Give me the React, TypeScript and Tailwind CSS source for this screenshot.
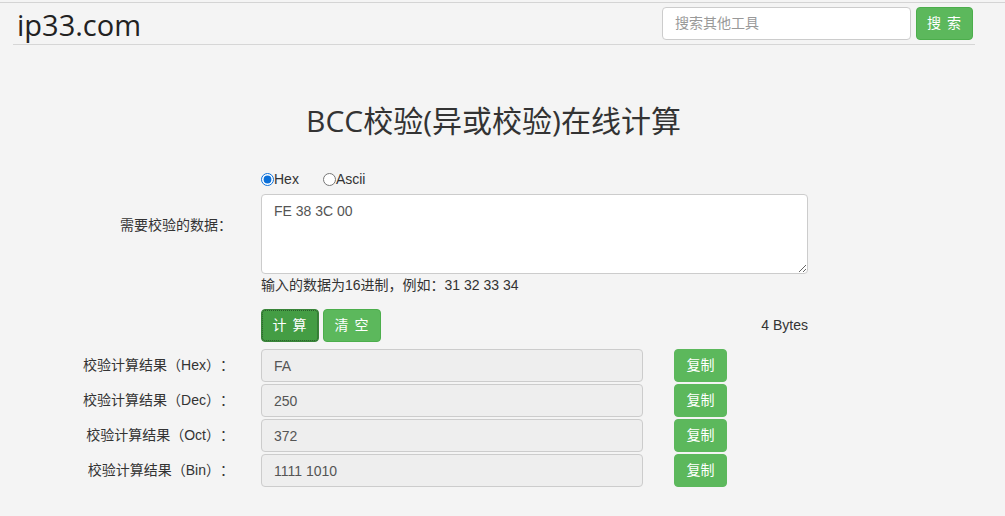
import { useState } from 'react';

// ─── Datos ───────────────────────────────────────────────────────────────────

const results = [
  { label: '校验计算结果（Hex）：', value: 'FA' },
  { label: '校验计算结果（Dec）：', value: '250' },
  { label: '校验计算结果（Oct）：', value: '372' },
  { label: '校验计算结果（Bin）：', value: '1111 1010' },
];

const greenBtn =
  'inline-flex items-center justify-center h-[33px] rounded-[4px] border border-[#4cae4c] bg-[#5cb85c] text-white text-[14px]';

// ─── Componente ──────────────────────────────────────────────────────────────

export default function App() {
  const [mode, setMode] = useState<'hex' | 'ascii'>('hex');

  return (
    <div className="min-h-screen bg-[#f4f4f4] text-[#333] text-[14px] [text-spacing-trim:space-all] font-['Liberation_Sans','Noto_Sans_CJK_SC',sans-serif]">
      <div className="h-[2px]" />
      <div className="border-t border-[#d4d4d4]" />

      {/* Header */}
      <header className="ml-[13px] w-[962px] h-[42px] flex items-center justify-between border-b border-[#d6d6d6]">
        <span className="pl-[4px] mt-[1px] text-[29px] leading-none text-[#222] font-['Open_Sans',sans-serif]">
          ip33.com
        </span>
        <div className="flex items-center gap-[5px] pr-[2px] -mt-[1px]">
          <input
            placeholder="搜索其他工具"
            className="w-[249px] h-[33px] px-[12px] rounded-[4px] border border-[#ccc] bg-white text-[14px] placeholder:text-[#999] outline-none"
          />
          <button className={`${greenBtn} w-[57px] tracking-[1px]`}>搜 索</button>
        </div>
      </header>

      {/* Título */}
      <h1 className="mt-[55px] pr-[18px] h-[40px] flex items-center justify-center text-[30px] text-[#333] font-['Open_Sans','Noto_Sans_CJK_SC',sans-serif]">
        BCC校验(异或校验)在线计算
      </h1>

      {/* Entrada */}
      <div className="mt-[29px] flex">
        <label className="w-[236px] pt-[46px] pr-[4px] text-right leading-[20px]">需要校验的数据：</label>
        <div className="ml-[25px] w-[547px] flex flex-col">
          <div className="h-[20px] flex items-center">
            <label className="flex items-center">
              <input
                type="radio"
                checked={mode === 'hex'}
                onChange={() => setMode('hex')}
                className="m-0 w-[13px] h-[13px] accent-[#0a6fd8]"
              />
              <span>Hex</span>
            </label>
            <label className="ml-[24px] flex items-center">
              <input
                type="radio"
                checked={mode === 'ascii'}
                onChange={() => setMode('ascii')}
                className="m-0 w-[13px] h-[13px] accent-[#0a6fd8]"
              />
              <span>Ascii</span>
            </label>
          </div>
          <textarea
            defaultValue="FE 38 3C 00"
            className="mt-[5px] h-[80px] w-full px-[12px] py-[6px] rounded-[4px] border border-[#ccc] bg-white text-[#555] text-[14px] leading-[20px] outline-none"
          />
          <p className="h-[20px] leading-[20px] mt-[1px]">输入的数据为16进制，例如：31 32 33 34</p>
          <div className="mt-[14px] flex items-center justify-between">
            <div className="flex gap-[4px]">
              <button className="inline-flex items-center justify-center w-[58px] h-[33px] rounded-[4px] border border-[#398439] bg-[#449d44] text-white tracking-[1px] outline outline-1 outline-dotted outline-[#2a5a2a] -outline-offset-2">
                计 算
              </button>
              <button className={`${greenBtn} w-[58px] tracking-[1px]`}>清 空</button>
            </div>
            <span className="-mt-[1px]">4 Bytes</span>
          </div>
        </div>
      </div>

      {/* Resultados */}
      <div className="mt-[7px] flex flex-col gap-[2px]">
        {results.map((r) => (
          <div key={r.label} className="flex items-center h-[33px]">
            <label className="w-[236px] pr-[2px] text-right">{r.label}</label>
            <input
              readOnly
              value={r.value}
              className="ml-[25px] w-[382px] h-[33px] px-[12px] rounded-[4px] border border-[#ccc] bg-[#eee] text-[#555] text-[14px] outline-none"
            />
            <button className={`${greenBtn} ml-[31px] w-[53px] border-[#5cb85c]`}>复制</button>
          </div>
        ))}
      </div>
    </div>
  );
}
